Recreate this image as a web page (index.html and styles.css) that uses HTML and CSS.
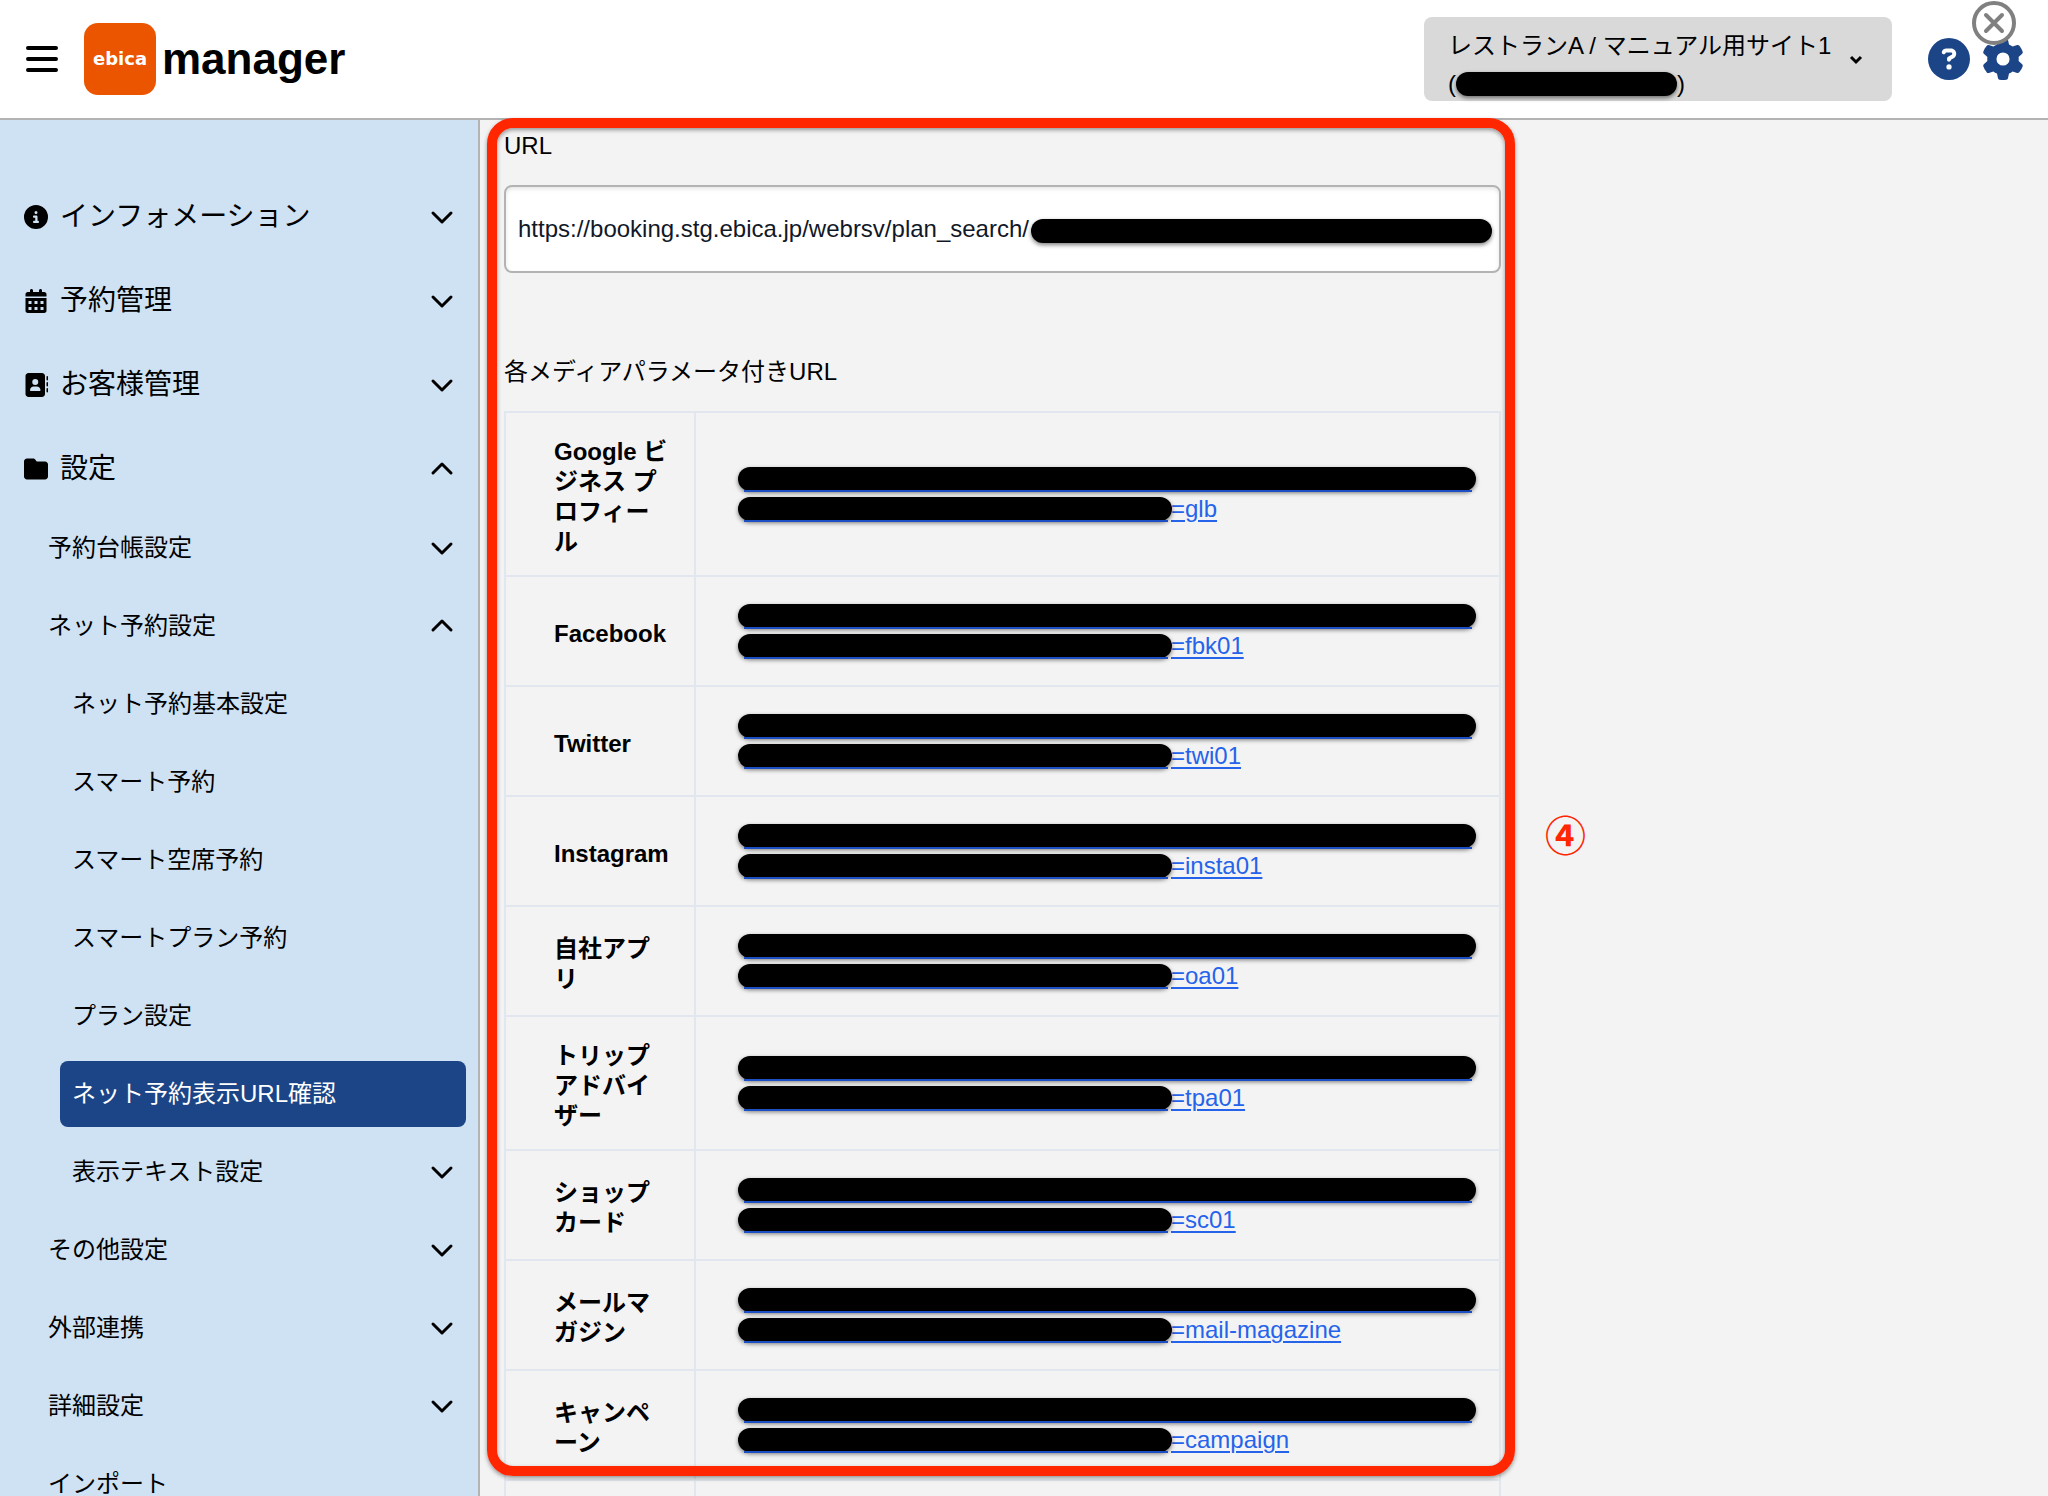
FILE: index.html
```html
<!DOCTYPE html>
<html lang="ja">
<head>
  <meta charset="UTF-8">
  <meta name="viewport" content="width=device-width, initial-scale=1.0">
  <title>ebica manager</title>
  <link rel="stylesheet" href="styles.css">
</head>
<body>
  <svg class="symbols" aria-hidden="true">
    <symbol id="down" viewBox="0 0 24 24"><path d="M3 8l9 9 9-9" fill="none" stroke="currentColor" stroke-width="3" stroke-linecap="round" stroke-linejoin="round"/></symbol>
    <symbol id="up" viewBox="0 0 24 24"><path d="M3 16l9-9 9 9" fill="none" stroke="currentColor" stroke-width="3" stroke-linecap="round" stroke-linejoin="round"/></symbol>
  </svg>

  <header class="header">
    <button class="icon-button menu-button" aria-label="メニュー">
      <svg width="32" height="28" viewBox="0 0 32 28"><path d="M2 3h28M2 14h28M2 25h28" stroke="#000" stroke-width="4" stroke-linecap="round"/></svg>
    </button>
    <a class="brand" href="#"><span class="logo">ebica</span>manager</a>
    <button class="site-select">
      <span class="site-name">レストランA / マニュアル用サイト1<br><span class="site-id">(<span class="mask mask-site"></span>)</span></span>
      <svg class="site-arrow" width="16" height="16" viewBox="0 0 16 16"><path d="M3 6l5 5 5-5" fill="none" stroke="#000" stroke-width="3"/></svg>
    </button>
    <button class="icon-button help-button" aria-label="ヘルプ">
      <svg width="42" height="42" viewBox="0 0 512 512"><path fill="currentColor" d="M256 512A256 256 0 1 0 256 0a256 256 0 1 0 0 512zM169.800 165.300c7.900-22.300 29.100-37.300 52.800-37.300h58.300c34.900 0 63.100 28.300 63.100 63.100c0 22.600-12.100 43.500-31.700 54.800L280 264.400c-.2 13-10.900 23.600-24 23.600c-13.300 0-24-10.700-24-24V250.500c0-8.600 4.600-16.500 12.100-20.800l44.300-25.400c4.700-2.700 7.600-7.700 7.600-13.100c0-8.400-6.800-15.100-15.100-15.100H222.600c-3.400 0-6.400 2.100-7.500 5.300l-.4 1.200c-4.400 12.500-18.200 19-30.600 14.600s-19-18.200-14.600-30.600l.4-1.200zM224 352a32 32 0 1 1 64 0 32 32 0 1 1 -64 0z"/></svg>
    </button>
    <button class="icon-button" aria-label="設定">
      <svg width="42" height="42" viewBox="0 0 512 512"><path fill="currentColor" d="M495.900 166.600c3.200 8.700 .5 18.400-6.400 24.600l-43.300 39.400c1.100 8.300 1.700 16.800 1.700 25.400s-.6 17.100-1.700 25.400l43.300 39.400c6.900 6.200 9.600 15.900 6.400 24.600c-4.400 11.900-9.700 23.300-15.800 34.300l-4.700 8.100c-6.600 11-14 21.400-22.100 31.200c-5.900 7.200-15.700 9.600-24.500 6.800l-55.700-17.700c-13.400 10.300-28.200 18.900-44 25.400l-12.500 57.100c-2 9.100-9 16.300-18.200 17.800c-13.800 2.300-28 3.500-42.500 3.500s-28.700-1.200-42.500-3.500c-9.200-1.500-16.200-8.700-18.200-17.800l-12.500-57.100c-15.800-6.500-30.600-15.100-44-25.400L83.100 425.900c-8.800 2.800-18.600 .3-24.500-6.800c-8.100-9.800-15.500-20.200-22.100-31.200l-4.700-8.100c-6.100-11-11.400-22.400-15.800-34.300c-3.200-8.700-.5-18.400 6.400-24.600l43.300-39.400C64.600 273.100 64 264.600 64 256s.6-17.100 1.700-25.400L22.400 191.200c-6.900-6.200-9.600-15.900-6.400-24.600c4.400-11.900 9.700-23.300 15.800-34.300l4.700-8.100c6.600-11 14-21.400 22.100-31.200c5.900-7.200 15.700-9.600 24.500-6.800l55.700 17.700c13.400-10.300 28.200-18.900 44-25.400l12.500-57.100c2-9.100 9-16.300 18.200-17.800C227.300 1.200 241.500 0 256 0s28.700 1.200 42.500 3.500c9.200 1.500 16.200 8.700 18.200 17.800l12.500 57.100c15.800 6.500 30.600 15.100 44 25.400l55.700-17.700c8.800-2.800 18.600-.3 24.500 6.800c8.100 9.800 15.500 20.200 22.100 31.200l4.700 8.100c6.100 11 11.400 22.400 15.800 34.300zM256 336a80 80 0 1 0 0-160 80 80 0 1 0 0 160z"/></svg>
    </button>
    <button class="icon-button close-button" aria-label="閉じる">
      <svg width="44" height="44" viewBox="0 0 44 44"><circle cx="22" cy="22" r="20" fill="#fff" stroke="#808080" stroke-width="4"/><path d="M14 14l16 16M30 14L14 30" stroke="#808080" stroke-width="4" stroke-linecap="round"/></svg>
    </button>
  </header>

  <div class="layout">
    <nav class="sidebar">
      <ul class="menu">
        <li><button class="item top-item">
          <svg class="item-icon" viewBox="0 0 512 512"><path d="M256 512A256 256 0 1 0 256 0a256 256 0 1 0 0 512zM216 336h24V272H216c-13.300 0-24-10.700-24-24s10.700-24 24-24h48c13.300 0 24 10.700 24 24v88h8c13.300 0 24 10.700 24 24s-10.700 24-24 24H216c-13.300 0-24-10.700-24-24s10.700-24 24-24zm40-208a32 32 0 1 1 0 64 32 32 0 1 1 0-64z"/></svg>
          <span>インフォメーション</span><svg class="chevron"><use href="#down"/></svg></button></li>
        <li><button class="item top-item">
          <svg class="item-icon" viewBox="0 0 448 512"><path fill-rule="evenodd" d="M128 0c17.700 0 32 14.300 32 32V64H288V32c0-17.700 14.300-32 32-32s32 14.300 32 32V64h48c26.500 0 48 21.500 48 48v48H0V112C0 85.500 21.500 64 48 64H96V32c0-17.700 14.300-32 32-32zM0 192H448V464c0 26.500-21.500 48-48 48H48c-26.500 0-48-21.500-48-48zM64 256v64h64v-64zM192 256v64h64v-64zM320 256v64h64v-64zM64 384v64h64v-64zM192 384v64h64v-64zM320 384v64h64v-64z"/></svg>
          <span>予約管理</span><svg class="chevron"><use href="#down"/></svg></button></li>
        <li><button class="item top-item">
          <svg class="item-icon" viewBox="0 0 512 512"><path d="M96 0C60.700 0 32 28.700 32 64V448c0 35.300 28.700 64 64 64H384c35.300 0 64-28.700 64-64V64c0-35.300-28.700-64-64-64H96zM208 288h64c44.200 0 80 35.800 80 80c0 8.800-7.200 16-16 16H144c-8.800 0-16-7.200-16-16c0-44.200 35.800-80 80-80zm-32-96a64 64 0 1 1 128 0 64 64 0 1 1 -128 0zM512 80c0-8.800-7.200-16-16-16s-16 7.200-16 16v64c0 8.800 7.200 16 16 16s16-7.200 16-16V80zM496 192c-8.800 0-16 7.200-16 16v64c0 8.800 7.200 16 16 16s16-7.200 16-16V208c0-8.800-7.200-16-16-16zm16 144c0-8.800-7.200-16-16-16s-16 7.200-16 16v64c0 8.800 7.200 16 16 16s16-7.200 16-16V336z"/></svg>
          <span>お客様管理</span><svg class="chevron"><use href="#down"/></svg></button></li>
        <li><button class="item top-item">
          <svg class="item-icon" viewBox="0 0 512 512"><path d="M64 480H448c35.300 0 64-28.700 64-64V160c0-35.300-28.700-64-64-64H288c-10.100 0-19.600-4.700-25.600-12.800L243.200 57.600C231.100 41.500 212.100 32 192 32H64C28.700 32 0 60.700 0 96V416c0 35.300 28.700 64 64 64z"/></svg>
          <span>設定</span><svg class="chevron"><use href="#up"/></svg></button>
          <ul class="menu sub-menu">
            <li><button class="item">予約台帳設定<svg class="chevron"><use href="#down"/></svg></button></li>
            <li><button class="item">ネット予約設定<svg class="chevron"><use href="#up"/></svg></button>
              <ul class="menu sub-menu">
                <li><a class="item" href="#">ネット予約基本設定</a></li>
                <li><a class="item" href="#">スマート予約</a></li>
                <li><a class="item" href="#">スマート空席予約</a></li>
                <li><a class="item" href="#">スマートプラン予約</a></li>
                <li><a class="item" href="#">プラン設定</a></li>
                <li><a class="item active" href="#">ネット予約表示URL確認</a></li>
                <li><button class="item">表示テキスト設定<svg class="chevron"><use href="#down"/></svg></button></li>
              </ul>
            </li>
            <li><button class="item">その他設定<svg class="chevron"><use href="#down"/></svg></button></li>
            <li><button class="item">外部連携<svg class="chevron"><use href="#down"/></svg></button></li>
            <li><button class="item">詳細設定<svg class="chevron"><use href="#down"/></svg></button></li>
            <li><a class="item" href="#">インポート</a></li>
          </ul>
        </li>
      </ul>
    </nav>

    <main class="main">
      <div class="content">
        <label class="label" for="booking-url">URL</label>
        <div class="url-field">
          <input id="booking-url" type="text" value="https://booking.stg.ebica.jp/webrsv/plan_search/" readonly>
          <span class="mask mask-url"></span>
        </div>

        <h2 class="label">各メディアパラメータ付きURL</h2>
        <table class="media-table">
          <tr><th scope="row">Google ビジネス プロフィール</th><td><a href="#"><span class="mask mask-line"></span><span class="mask mask-half"></span>=glb</a></td></tr>
          <tr><th scope="row">Facebook</th><td><a href="#"><span class="mask mask-line"></span><span class="mask mask-half"></span>=fbk01</a></td></tr>
          <tr><th scope="row">Twitter</th><td><a href="#"><span class="mask mask-line"></span><span class="mask mask-half"></span>=twi01</a></td></tr>
          <tr><th scope="row">Instagram</th><td><a href="#"><span class="mask mask-line"></span><span class="mask mask-half"></span>=insta01</a></td></tr>
          <tr><th scope="row">自社アプリ</th><td><a href="#"><span class="mask mask-line"></span><span class="mask mask-half"></span>=oa01</a></td></tr>
          <tr><th scope="row">トリップアドバイザー</th><td><a href="#"><span class="mask mask-line"></span><span class="mask mask-half"></span>=tpa01</a></td></tr>
          <tr><th scope="row">ショップカード</th><td><a href="#"><span class="mask mask-line"></span><span class="mask mask-half"></span>=sc01</a></td></tr>
          <tr><th scope="row">メールマガジン</th><td><a href="#"><span class="mask mask-line"></span><span class="mask mask-half"></span>=mail-magazine</a></td></tr>
          <tr><th scope="row">キャンペーン</th><td><a href="#"><span class="mask mask-line"></span><span class="mask mask-half"></span>=campaign</a></td></tr>
          <tr><th></th><td></td></tr>
        </table>

        <div class="callout-frame"></div>
        <span class="callout-number">④</span>
      </div>
    </main>
  </div>
</body>
</html>
```

FILE: styles.css
```css
* {
  margin: 0;
  padding: 0;
  box-sizing: border-box;
}

body {
  height: 100vh;
  display: flex;
  flex-direction: column;
  overflow: hidden;
  font-family: "Liberation Sans", "Noto Sans CJK JP", sans-serif;
  font-size: 24px;
  line-height: 30px;
  color: #000;
  background: #f3f3f3;
}

button,
input {
  font: inherit;
  color: inherit;
}

button {
  border: none;
  background: none;
  cursor: pointer;
}

a {
  color: inherit;
  text-decoration: none;
}

svg {
  display: block;
}

.symbols {
  display: none;
}

/* header */
.header {
  position: relative;
  flex: none;
  display: flex;
  align-items: center;
  height: 120px;
  padding: 0 24px;
  background: #fff;
  border-bottom: 2px solid #b3b3b3;
}

.icon-button {
  color: #1c4587;
}

.menu-button {
  margin: 0 26px 0 2px;
}

.brand {
  display: flex;
  align-items: center;
  gap: 6px;
  margin-right: auto;
  font-size: 44px;
  font-weight: bold;
}

.logo {
  width: 72px;
  height: 72px;
  border-radius: 14px;
  background: #eb5500;
  color: #fff;
  font-family: "DejaVu Sans", sans-serif;
  font-size: 18px;
  line-height: 72px;
  text-align: center;
}

.site-select {
  display: flex;
  align-items: center;
  justify-content: space-between;
  width: 468px;
  height: 84px;
  margin-right: 36px;
  padding: 0 28px 0 24px;
  border-radius: 8px;
  background: #d9d9d9;
  text-align: left;
}

.site-name {
  padding-top: 12px;
  line-height: 38px;
  white-space: nowrap;
}

.site-id {
  display: flex;
  align-items: center;
}

.site-arrow {
  flex: none;
}

.help-button {
  margin-right: 12px;
}

.close-button {
  position: absolute;
  top: 1px;
  right: 32px;
}

/* blacked-out values */
.mask {
  display: block;
  height: 24px;
  border-radius: 12px;
  background: #000;
  box-shadow: 0 2px 4px rgba(0, 0, 0, 0.5);
}

.mask-site {
  width: 221px;
}

.mask-url {
  position: absolute;
  top: 34px;
  right: 9px;
  width: 461px;
}

/* sidebar */
.layout {
  flex: 1;
  display: flex;
  min-height: 0;
}

.sidebar {
  flex: none;
  width: 480px;
  padding: 54px 12px 0;
  overflow: hidden;
  background: #cfe2f3;
  border-right: 2px solid #b3b3b3;
}

.menu {
  list-style: none;
}

.sub-menu {
  padding-left: 24px;
}

.item {
  display: flex;
  align-items: center;
  width: 100%;
  height: 66px;
  margin: 0 0 12px;
  padding: 0 12px 1px;
  border-radius: 8px;
  text-align: left;
}

.top-item {
  gap: 12px;
  height: 72px;
  margin-top: 6px;
  padding: 1px 12px 0;
  font-size: 28px;
}

.top-item + .sub-menu {
  margin-top: -1px;
}

.active {
  background: #1c4587;
  color: #fff;
}

.item-icon {
  width: 24px;
  height: 24px;
}

.chevron {
  width: 24px;
  height: 24px;
  margin-left: auto;
}

/* main */
.main {
  flex: 1;
  padding: 11px 24px 0;
}

.content {
  position: relative;
  max-width: 997px;
}

.label {
  display: block;
  font-size: 24px;
  font-weight: normal;
}

.url-field {
  position: relative;
  margin: 24px 0 84px;
}

.url-field input {
  display: block;
  width: 100%;
  height: 88px;
  padding: 0 12px;
  border: 2px solid #b3b3b3;
  border-radius: 8px;
  background: #fff;
  box-shadow: inset 0 2px 4px rgba(0, 0, 0, 0.1);
  color: #111827;
}

.media-table {
  width: 100%;
  margin-top: 24px;
  border-collapse: collapse;
  table-layout: fixed;
}

.media-table th,
.media-table td {
  border: 2px solid #e2e6ee;
  text-align: left;
  vertical-align: middle;
}

.media-table th {
  width: 190px;
  padding: 24px 24px 18px 48px;
  line-break: anywhere;
}

.media-table td {
  padding: 24px 24px 24px 48px;
}

.media-table a {
  color: #2563eb;
  text-decoration: underline;
  text-decoration-thickness: 2px;
  text-underline-offset: 3px;
}

.media-table .mask {
  position: relative;
  display: inline-block;
  vertical-align: top;
  margin: 3px 0 3px -6px;
}

/* the part of the link underline left visible below the bar */
.media-table .mask::after {
  content: "";
  position: absolute;
  left: 6px;
  right: 4px;
  bottom: -1px;
  height: 2px;
  background: #1d4fc4;
}

.mask-line {
  width: 738px;
}

.media-table .mask-half {
  width: 434px;
  margin-right: -1px;
}

/* callout drawn over the page */
.callout-frame {
  position: absolute;
  top: -13px;
  left: -17px;
  right: -14px;
  height: 1358px;
  border: 10px solid #ff2600;
  border-radius: 26px;
  box-shadow: 0 2px 4px rgba(0, 0, 0, 0.4), inset 0 2px 4px rgba(0, 0, 0, 0.4);
  pointer-events: none;
}

.callout-number {
  position: absolute;
  top: 681px;
  left: 1041px;
  color: #ff2600;
  font-family: "Noto Sans CJK JP", sans-serif;
  font-size: 41px;
  font-weight: bold;
  line-height: 42px;
}
```
